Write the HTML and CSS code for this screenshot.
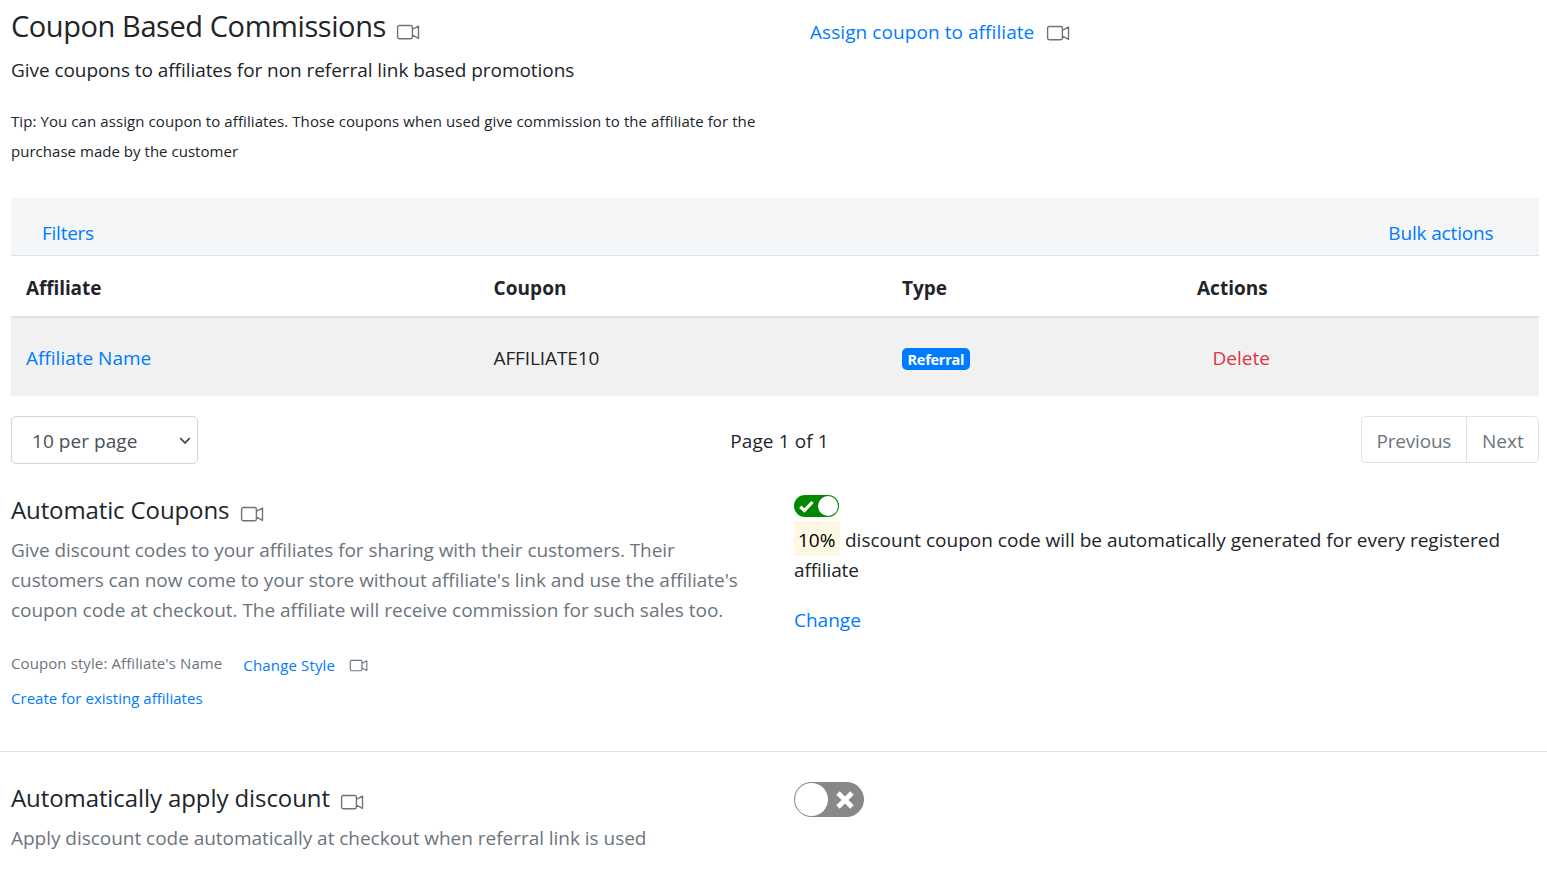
FILE: index.html
```html
<!DOCTYPE html>
<html lang="en">
<head>
<meta charset="utf-8">
<title>Coupon Based Commissions</title>
<link rel="stylesheet" href="styles.css">
</head>
<body>
<svg class="sprite" aria-hidden="true">
  <symbol id="cam" viewBox="0 0 24 16"><path d="M3.2 1.5h11.6a1.6 1.6 0 0 1 1.6 1.6v10a1.6 1.6 0 0 1-1.6 1.6H3.2a1.6 1.6 0 0 1-1.6-1.6v-10a1.6 1.6 0 0 1 1.6-1.6zM16.4 5.4l6.1-3.4v12.4l-6.1-3.4" fill="none" stroke="currentColor" stroke-width="1.4" stroke-linejoin="round"/></symbol>
</svg>
<header class="cols intro">
  <div>
    <h1 class="title"><span class="t-title">Coupon Based Commissions</span><svg class="cam"><use href="#cam"/></svg></h1>
    <p class="lead"><span class="t-lead">Give coupons to affiliates for non referral link based promotions</span></p>
    <p class="tip"><span class="t-tip1">Tip: You can assign coupon to affiliates. Those coupons when used give commission to the affiliate for the</span><br><span class="t-tip2">purchase made by the customer</span></p>
  </div>
  <div class="assign"><a class="t-assign">Assign coupon to affiliate</a><svg class="cam"><use href="#cam"/></svg></div>
</header>
<main>
  <div class="toolbar"><a class="t-filters">Filters</a><a class="t-bulk">Bulk actions</a></div>
  <div class="grid head"><b class="t-haff">Affiliate</b><b class="t-hcoupon">Coupon</b><b>Type</b><b>Actions</b></div>
  <div class="grid row"><a>Affiliate Name</a><span class="t-code">AFFILIATE10</span><span class="badge">Referral</span><a class="delete">Delete</a></div>
  <div class="pager">
    <div class="select"><span class="t-per">10 per page</span><svg class="chev" viewBox="0 0 12 8"><path d="M1.2 1.2 6 6l4.8-4.8" fill="none" stroke="currentColor" stroke-width="1.8"/></svg></div>
    <span class="t-page">Page 1 of 1</span>
    <div class="pages"><span class="prev">Previous</span><span class="next">Next</span></div>
  </div>
  <section class="cols auto">
    <div>
      <h2><span class="t-h2a">Automatic Coupons</span><svg class="cam"><use href="#cam"/></svg></h2>
      <p class="muted"><span class="t-p1">Give discount codes to your affiliates for sharing with their customers. Their</span><br><span class="t-p2">customers can now come to your store without affiliate's link and use the affiliate's</span><br><span class="t-p3">coupon code at checkout. The affiliate will receive commission for such sales too.</span></p>
      <div class="style"><span class="muted t-style">Coupon style: Affiliate's Name</span><a class="t-change">Change Style</a><svg class="cam small"><use href="#cam"/></svg></div>
      <a class="create">Create for existing affiliates</a>
    </div>
    <div class="side">
      <div class="toggle on"><svg class="mark" viewBox="0 0 14 12"><path d="M1.2 6.2 5 9.8l7.6-8" fill="none" stroke="#fff" stroke-width="3"/></svg><i class="knob"></i></div>
      <p class="rule"><mark>10%</mark>discount coupon code will be automatically generated for every registered<br><span class="t-rule2">affiliate</span></p>
      <a>Change</a>
    </div>
  </section>
</main>
<hr>
<section class="cols apply">
  <div>
    <h2><span class="t-h2b">Automatically apply discount</span><svg class="cam"><use href="#cam"/></svg></h2>
    <p class="muted"><span class="t-p4">Apply discount code automatically at checkout when referral link is used</span></p>
  </div>
  <div class="side"><div class="toggle off"><i class="knob"></i><svg class="mark" viewBox="0 0 18 18"><path d="m2 2 14 14M16 2 2 16" fill="none" stroke="#fff" stroke-width="5"/></svg></div></div>
</section>
</body>
</html>
```
FILE: styles.css
```css
* { box-sizing: border-box; }
body { margin: 0; font: 19px/30px "Open Sans", "Noto Sans", sans-serif; color: #212529; background: #fff; white-space: nowrap; overflow: hidden; }
h1, h2, p { margin: 0; font-weight: 400; }
a { color: #007bff; }
.sprite { position: absolute; width: 0; height: 0; }
.cam { width: 24px; height: 16px; color: #6c757d; flex: none; }
.cam.small { width: 19px; height: 13px; }
.cols { display: grid; grid-template-columns: 783px 1fr; padding-left: 11px; }
.intro { height: 198px; }
.title { display: flex; align-items: center; gap: 10px; height: 36px; margin-top: 8px; font-size: 29px; line-height: 36px; }
.title .cam { margin-top: 12px; }
.lead { margin-top: 11px; }
.tip { margin-top: 21px; font-size: 15px; }
.assign { display: flex; align-items: center; gap: 11.4px; height: 30px; margin-top: 17px; padding-left: 16px; }
.assign .cam { margin-top: 2px; }
main { width: 1547px; }
.toolbar, .grid, .pager { margin: 0 8px 0 11px; }
.toolbar { display: flex; justify-content: space-between; height: 58px; padding: 20px 45.5px 0 31px; background: #f4f6f8; border-bottom: 1px solid #dee2e6; }
.grid { display: grid; grid-template-columns: 467.5px 408.5px 295px 1fr; align-items: center; padding-left: 15px; }
.head { height: 62px; border-bottom: 2px solid #dee2e6; padding-top: 3px; }
.row { height: 78px; background: #f1f1f1; padding-top: 2px; }
.grid > * { justify-self: start; }
.badge { height: 22px; padding: 0 5.5px; border-radius: 5px; background: #007bff; color: #fff; font: 700 14.5px/23px "Open Sans", sans-serif; letter-spacing: -0.25px; margin-top: 1px; }
.delete { padding-left: 15.5px; color: #dc3545; }
.pager { display: flex; align-items: center; justify-content: space-between; height: 48px; margin-top: 20px; }
.select { display: flex; align-items: center; justify-content: space-between; width: 187px; height: 48px; padding: 1px 6px 0 20px; border: 1px solid #ced4da; border-radius: 5px; color: #495057; }
.chev { width: 12px; height: 8px; }
.pages { display: flex; width: 178px; height: 47px; margin-bottom: 1px; border: 1px solid #dee2e6; border-radius: 5px; color: #6c757d; line-height: 48px; }
.prev { width: 105px; padding-left: 14.5px; border-right: 1px solid #dee2e6; letter-spacing: -0.2px; }
.next { padding-left: 15px; }
h2 { display: flex; align-items: center; gap: 10.4px; height: 30px; font-size: 24px; line-height: 30px; }
h2 .cam { margin-top: 8px; }
.muted { color: #6c757d; }
h2 + .muted { margin-top: 10px; }
.auto { height: 287px; padding-top: 31px; }
.style { display: flex; align-items: center; height: 30px; margin-top: 23px; font-size: 15px; }
.style a { margin: 3px 13.5px 0 21px; }
.style .cam { margin-top: 5px; }
.create { display: block; margin-top: 5px; font-size: 15px; letter-spacing: 0.03px; }
.toggle { display: flex; align-items: center; justify-content: space-between; border-radius: 99px; }
.on { width: 45px; height: 22px; padding: 0 1px 0 5px; background: #080; }
.on .mark { width: 15px; height: 13px; }
.knob { border-radius: 50%; background: #fff; }
.on .knob { width: 20px; height: 20px; }
.off { width: 70px; height: 35px; padding: 0 10px 0 1px; background: #888; }
.off .mark { width: 18px; height: 18px; }
.off .knob { width: 33px; height: 33px; }
.rule { margin: 8px 0 20px; }
mark { display: inline-block; width: 46px; height: 35px; margin: -4px 5px -1px 0; padding: 4px 0 0 4px; background: #fcf8e3; vertical-align: top; color: #000; }
hr { width: 100%; height: 1px; margin: 0; border: 0; background: #dee2e6; }
.apply { padding-top: 30px; }
.apply h2 { margin-top: 1px; }

.t-title { letter-spacing: -0.42px; }
.t-lead { letter-spacing: -0.06px; }
.t-tip1 { letter-spacing: 0.085px; }
.t-tip2 { letter-spacing: 0.03px; }
.t-assign { letter-spacing: 0.07px; }
.t-filters { letter-spacing: -0.25px; }
.t-bulk { letter-spacing: -0.15px; }
.t-haff { letter-spacing: -0.1px; }
.t-hcoupon { letter-spacing: 0.08px; }
.t-code { letter-spacing: -0.1px; }
.t-per { letter-spacing: 0.05px; }
.t-page { letter-spacing: 0.12px; padding-top: 2px; }
.t-h2a { letter-spacing: -0.12px; }
.t-h2b { letter-spacing: -0.09px; }
.t-p1 { letter-spacing: -0.065px; }
.t-p2 { letter-spacing: -0.045px; }
.t-p3, .t-p4 { letter-spacing: -0.03px; }
.t-style { letter-spacing: 0.1px; }
.t-change { letter-spacing: 0.15px; }
.t-rule2 { letter-spacing: -0.1px; }
```
